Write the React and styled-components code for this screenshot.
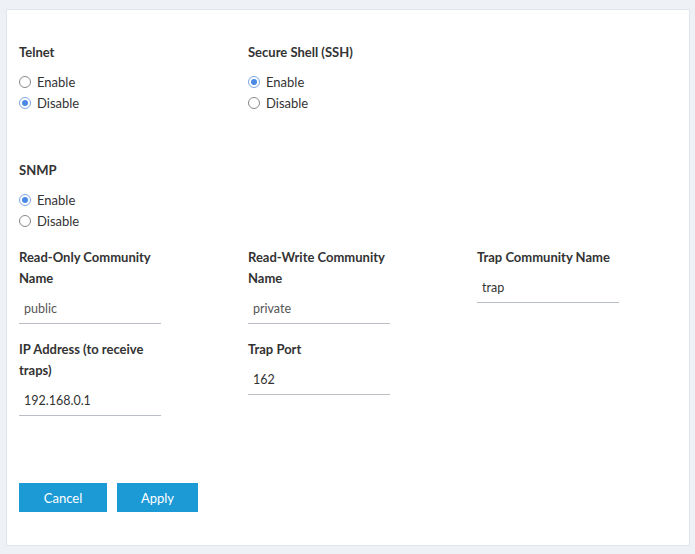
import React from "react";
import styled, { createGlobalStyle } from "styled-components";

const Global = createGlobalStyle`
  html, body { margin: 0; background: #eef1f5; }
  body { font-family: Lato, "Noto Sans", sans-serif; color: #333; }
`;
const Page = styled.div`padding: 9px 5px 6px 6px;`;
const Panel = styled.div`
  background: #fff; border: 1px solid #e1e6ec; height: 537px; box-sizing: border-box;
  padding: 32px 0 0 12px; display: flex; flex-direction: column;
`;
const Row = styled.div`display: grid; grid-template-columns: repeat(3, 229px); margin-bottom: ${p => p.mb || 0}px;`;
const Field = styled.div`display: flex; flex-direction: column;`;
const Label = styled.div`font-weight: 700; font-size: 13px; line-height: 21px; color: #333; width: ${p => p.w || 150}px; margin-bottom: ${p => p.mb ?? 8}px;`;
const RadioRow = styled.label`display: flex; align-items: center; gap: 6px; font-size: 13px; height: 21px; color: #333;`;
const Circle = styled.span`
  width: 12px; height: 12px; border-radius: 50%; border: 1px solid #888; box-sizing: border-box;
  display: flex; align-items: center; justify-content: center; background: #fff;
  &::after { content: ""; width: 6px; height: 6px; border-radius: 50%; background: ${p => p.on ? "#4a8ae6" : "transparent"}; }
  ${p => p.on && "border-color:#7aa6e0;"}
`;
const Input = styled.div`
  width: 142px; box-sizing: border-box; padding: 0 0 6px 5px; font-size: 12.5px; color: ${p => p.muted ? "#555" : "#333"};
  border-bottom: 1px solid #b9bec4; line-height: 16px;
`;
const Buttons = styled.div`display: flex; gap: 10px; margin-top: auto; margin-bottom: 33px;`;
const Button = styled.button`
  width: ${p => p.w}px; height: 29px; border: none; background: #1c9ad6; color: #fff;
  font-family: Lato, "Noto Sans", sans-serif; font-size: 13px;
`;

const Radio = ({ label, on }) => <RadioRow><Circle on={on ? 1 : 0} />{label}</RadioRow>;

export default function App() {
  return (
    <Page>
      <Global />
      <Panel>
        <Row mb={47}>
          <Field><Label>Telnet</Label><Radio label="Enable" /><Radio label="Disable" on /></Field>
          <Field><Label>Secure Shell (SSH)</Label><Radio label="Enable" on /><Radio label="Disable" /></Field>
        </Row>
        <Row mb={16}>
          <Field><Label>SNMP</Label><Radio label="Enable" on /><Radio label="Disable" /></Field>
        </Row>
        <Row mb={15}>
          <Field><Label mb={12}>Read-Only Community Name</Label><Input muted>public</Input></Field>
          <Field><Label mb={12}>Read-Write Community Name</Label><Input muted>private</Input></Field>
          <Field><Label mb={12}>Trap Community Name</Label><Input>trap</Input></Field>
        </Row>
        <Row>
          <Field><Label mb={12}>IP Address (to receive traps)</Label><Input>192.168.0.1</Input></Field>
          <Field><Label mb={12}>Trap Port</Label><Input>162</Input></Field>
        </Row>
        <Buttons><Button w={88}>Cancel</Button><Button w={81}>Apply</Button></Buttons>
      </Panel>
    </Page>
  );
}
